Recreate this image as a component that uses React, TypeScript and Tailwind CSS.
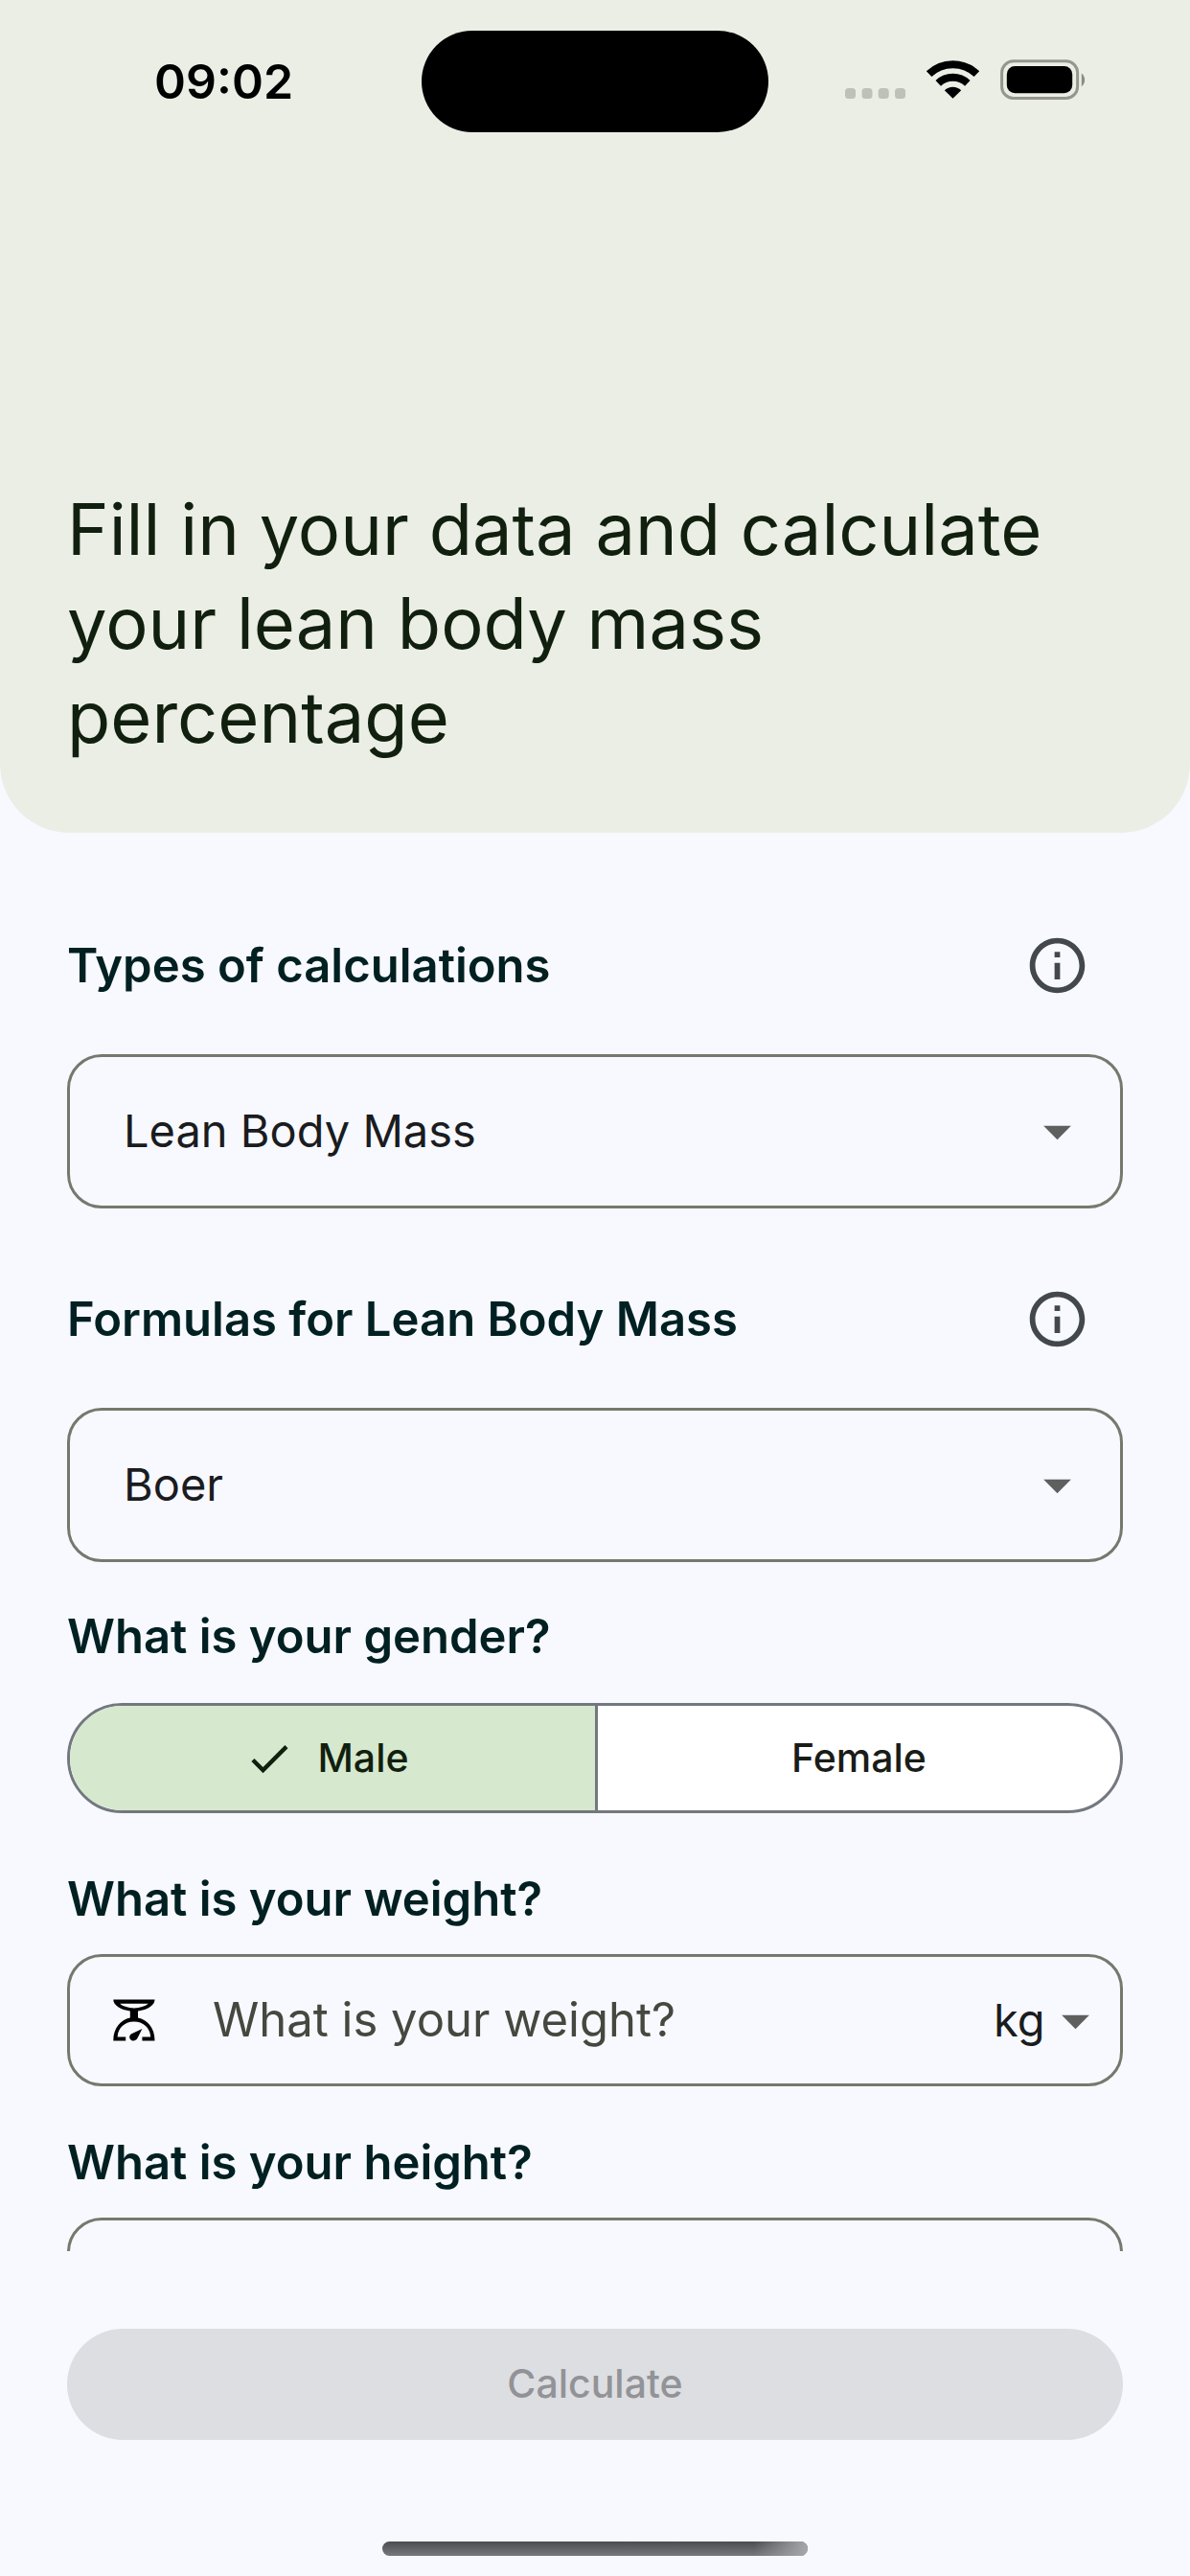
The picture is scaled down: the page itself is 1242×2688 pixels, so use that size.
import { useState } from 'react';
import type { ReactNode } from 'react';
import { MdArrowDropDown, MdCheck, MdInfoOutline } from 'react-icons/md';

const calculationTypes = ['Lean Body Mass', 'Body Mass Index', 'Body Fat'];
const formulas = ['Boer', 'James', 'Hume'];
const genders = ['Male', 'Female'];

function StatusIcons() {
  return (
    <svg width="252" height="46" viewBox="0 0 252 46" aria-hidden="true">
      {/* Signal dots */}
      <g fill="#bfc1b9">
        <rect x="0" y="30" width="11" height="11" rx="3.5" />
        <rect x="17.5" y="30" width="11" height="11" rx="3.5" />
        <rect x="34.7" y="30" width="11" height="11" rx="3.5" />
        <rect x="52" y="30" width="11" height="11" rx="3.5" />
      </g>
      {/* Wi-Fi */}
      <g fill="none" stroke="#000" strokeWidth="8">
        <path d="M87.6 15.2 A36 36 0 0 1 137.4 15.2" />
        <path d="M97.2 24.8 A22.4 22.4 0 0 1 127.8 24.8" />
      </g>
      <path d="M112.5 40.8 L103.8 32.2 A12.4 12.4 0 0 1 121.2 32.2 Z" fill="#000" />
      {/* Battery */}
      <rect x="163.6" y="1.8" width="79" height="38.6" rx="12" fill="none" stroke="#95978f" strokeWidth="3" />
      <rect x="168.8" y="7" width="68.4" height="28.2" rx="8.5" fill="#000" />
      <path d="M246.8 14.6 A8.6 8.6 0 0 1 246.8 28.2 Z" fill="#8b8d87" />
    </svg>
  );
}

function ScaleIcon() {
  return (
    <svg width="44" height="44" viewBox="0 0 44 44" className="shrink-0" aria-hidden="true">
      <path
        d="M0.3 0.5 H43.5 C43.5 6.5 36 11 26 12.6 V19.6 C36 21.6 43.5 30 43.5 43.5 H30.4 V39.4 H39.2 C38.6 29.6 31 23.6 21.9 23.6 S5.2 29.6 4.6 39.4 H13.2 V43.5 H0.3 C0.3 30 8 21.6 17.8 19.6 V12.6 C8 11 0.3 6.5 0.3 0.5 Z M7 4.8 C10.4 7.6 15.6 9.4 21.9 9.4 S33.4 7.6 36.8 4.8 Z"
        fillRule="evenodd"
      />
      <path d="M30.4 31 L25.6 40.4 C24 43.2 21.6 43.9 19.6 43.2 C16.6 42 16.4 38.6 18.8 36.6 Z" />
    </svg>
  );
}

function SectionLabel({ htmlFor, children }: { htmlFor: string; children: ReactNode }) {
  return (
    <label htmlFor={htmlFor} className="block text-[49px] leading-[60px] font-semibold text-[#002022]">
      {children}
    </label>
  );
}

type SelectFieldProps = {
  id: string;
  label: string;
  options: string[];
};

function SelectField({ id, label, options }: SelectFieldProps) {
  return (
    <div>
      <div className="flex items-center justify-between pr-[34px]">
        <SectionLabel htmlFor={id}>{label}</SectionLabel>
        <button type="button" aria-label={`About ${label}`} className="text-[#43484c]">
          <MdInfoOutline className="size-[69px]" />
        </button>
      </div>
      <div className="relative mt-[58px]">
        <select
          id={id}
          className="block h-[161px] w-full appearance-none rounded-[36px] border-3 border-[#74796d] bg-transparent px-14 text-[47px] text-[#1a1c20]"
        >
          {options.map((option) => (
            <option key={option}>{option}</option>
          ))}
        </select>
        <MdArrowDropDown className="pointer-events-none absolute inset-y-0 right-[34px] my-auto size-[69px] text-[#5f5f5f]" />
      </div>
    </div>
  );
}

type MeasureFieldProps = {
  id: string;
  label: string;
  units: string[];
  icon?: ReactNode;
};

function MeasureField({ id, label, units, icon }: MeasureFieldProps) {
  return (
    <div>
      <SectionLabel htmlFor={id}>{label}</SectionLabel>
      <div className="mt-[27px] flex h-[138px] items-center rounded-[36px] border-3 border-[#74796d] pr-3 pl-[45px]">
        {icon}
        <input
          id={id}
          type="text"
          inputMode="decimal"
          placeholder={label}
          className="ml-[60px] min-w-0 flex-1 bg-transparent text-[49px] text-[#1a1c20] outline-none placeholder:text-[#44483e]"
        />
        <div className="relative">
          <select
            aria-label={`${label} Unit`}
            className="block w-[120px] appearance-none bg-transparent text-[47px] text-[#1a1c20]"
          >
            {units.map((unit) => (
              <option key={unit}>{unit}</option>
            ))}
          </select>
          <MdArrowDropDown className="pointer-events-none absolute inset-y-0 right-0 my-auto size-[69px] text-[#5f5f5f]" />
        </div>
      </div>
    </div>
  );
}

function GenderField() {
  const [gender, setGender] = useState('Male');

  return (
    <fieldset>
      <legend className="block text-[49px] leading-[60px] font-semibold text-[#002022]">What is your gender?</legend>
      <div className="mt-[39px] grid h-[115px] grid-cols-2 overflow-hidden rounded-full border-3 border-[#72787e] bg-white">
        {genders.map((item) => (
          <label
            key={item}
            className="flex items-center justify-center gap-6 border-[#72787e] text-[41px] font-medium text-[#1a1c18] not-first:border-l-3 has-checked:bg-[#d6e8ce] has-checked:pr-3 has-checked:text-[#111f0f]"
          >
            <input
              type="radio"
              name="gender"
              value={item}
              checked={gender === item}
              onChange={() => setGender(item)}
              className="sr-only"
            />
            {gender === item && <MdCheck className="size-[52px]" />}
            {item}
          </label>
        ))}
      </div>
    </fieldset>
  );
}

export default function App() {
  return (
    <div className="flex h-screen flex-col bg-[#f8f9ff] font-['Inter','Liberation_Sans',sans-serif]">
      <header className="shrink-0 rounded-b-[72px] bg-[#ebeee5] pt-8 pb-[72px]">
        <div className="grid grid-cols-[1fr_auto_1fr] items-center">
          <span className="pl-[161px] text-[50px] leading-none font-semibold text-black">09:02</span>
          <div className="h-[106px] w-[362px] rounded-full bg-black" />
          <div className="flex justify-end pr-[108px]">
            <StatusIcons />
          </div>
        </div>
        <h1 className="mt-[365px] px-[70px] text-[74px] leading-[98px] text-[#111f0f]">
          Fill in your data and calculate your lean body mass percentage
        </h1>
      </header>

      <main className="min-h-0 flex-1 overflow-y-auto px-[70px] pt-[104px] [scrollbar-width:none]">
        <SelectField id="calculation-type" label="Types of calculations" options={calculationTypes} />
        <div className="mt-[81px] mb-12">
          <SelectField id="formula" label="Formulas for Lean Body Mass" options={formulas} />
        </div>
        <GenderField />
        <div className="mt-[60px] mb-[50px]">
          <MeasureField id="weight" label="What is your weight?" units={['kg', 'lb']} icon={<ScaleIcon />} />
        </div>
        <MeasureField id="height" label="What is your height?" units={['cm', 'ft']} />
      </main>

      <footer className="shrink-0 px-[70px] pt-[81px] pb-[21px]">
        <button
          type="button"
          disabled
          className="h-[116px] w-full rounded-full bg-[#dddee2] text-[41px] font-medium text-[#929397]"
        >
          Calculate
        </button>
        {/* Home indicator */}
        <div className="mx-auto mt-[106px] h-[15px] w-[444px] overflow-hidden rounded-full bg-linear-to-b from-[#4b4d50] to-[#77797c]">
          <div className="ml-auto h-full w-14 bg-linear-to-r from-transparent to-[#a6a8ab]" />
        </div>
      </footer>
    </div>
  );
}
